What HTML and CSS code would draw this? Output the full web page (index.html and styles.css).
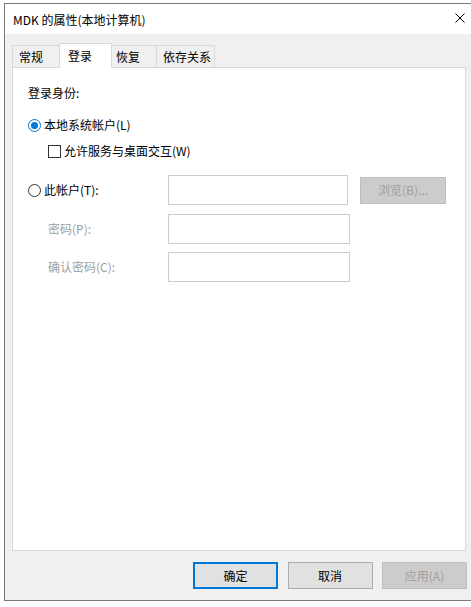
FILE: index.html
```html
<!DOCTYPE html>
<html>
<head>
    <title>MDK 的属性(本地计算机)</title>
    <link rel="stylesheet" href="styles.css">
</head>
<body>
    <div class="window">
        <div class="titlebar">
            <span class="title">MDK 的属性(本地计算机)</span>
            <span class="close">
                <svg width="10" height="10" viewBox="0 0 10 10"><path d="M0.5 0.5L9.5 9.5M9.5 0.5L0.5 9.5" stroke="#000" stroke-width="1"/></svg>
            </span>
        </div>
        <div class="body">
            <div class="tabs">
                <div class="tab">常规</div>
                <div class="tab active">登录</div>
                <div class="tab">恢复</div>
                <div class="tab">依存关系</div>
            </div>
            <div class="panel">
                <div class="group-label">登录身份:</div>
                <label class="option first"><span class="radio checked"></span>本地系统帐户(L)</label>
                <label class="check-row"><span class="checkbox"></span>允许服务与桌面交互(W)</label>

                <div class="account-grid">
                    <label class="option"><span class="radio"></span>此帐户(T):</label>
                    <div class="field short"></div>
                    <div class="btn browse disabled">浏览(B)...</div>

                    <span class="field-label">密码(P):</span>
                    <div class="field"></div>
                    <span></span>

                    <span class="field-label">确认密码(C):</span>
                    <div class="field"></div>
                    <span></span>
                </div>
            </div>
            <div class="actions">
                <div class="btn default">确定</div>
                <div class="btn">取消</div>
                <div class="btn disabled">应用(A)</div>
            </div>
        </div>
    </div>
</body>
</html>
```

FILE: styles.css
```css
body { margin: 0; background: #fff; overflow: hidden; font-family: "Noto Sans CJK SC", "Noto Sans", sans-serif; font-size: 12px; color: #000; }
.window { margin: 3px 0 0 4px; width: 480px; height: 598px; box-sizing: border-box; border: 1px solid #7a7a7a; background: #f0f0f0; display: flex; flex-direction: column; }
.titlebar { height: 30px; background: #fff; display: flex; align-items: center; justify-content: space-between; padding-left: 8px; flex: none; }
.title { line-height: 16px; margin-top: 1px; }
.close { width: 46px; height: 30px; display: flex; align-items: center; justify-content: center; margin-top: -3px; }
.body { padding: 9px 0 0 7px; }
.tabs { display: flex; align-items: flex-end; height: 24px; }
.tab { height: 22px; line-height: 21px; min-width: 48px; padding: 0 3px 0 6px; box-sizing: border-box; border: 1px solid #d9d9d9; border-bottom: none; margin-left: -1px; background: #f0f0f0; }
.tab:first-child { margin-left: 0; min-width: 50px; }
.tab.active { height: 25px; line-height: 23px; background: #fff; margin: 0 -2px -1px -3px; min-width: 53px; padding-left: 8px; position: relative; z-index: 1; }
.panel { width: 454px; height: 484px; box-sizing: border-box; border: 1px solid #d9d9d9; background: #fff; padding: 16px 0 0 15px; }
.group-label { line-height: 18px; }
.option { display: flex; align-items: center; gap: 3px; line-height: 18px; }
.option.first { margin-top: 14px; }
.radio { width: 13px; height: 13px; box-sizing: border-box; border: 1px solid #333; border-radius: 50%; background: #fff; display: flex; align-items: center; justify-content: center; }
.radio.checked { border-color: #0078d7; }
.radio.checked::after { content: ""; width: 7px; height: 7px; border-radius: 50%; background: #0078d7; }
.check-row { display: flex; align-items: center; gap: 3px; line-height: 18px; margin-top: 8px; padding-left: 20px; }
.checkbox { width: 13px; height: 13px; box-sizing: border-box; border: 1px solid #333; background: #fff; }
.account-grid { display: grid; grid-template-columns: 130px auto 86px; grid-auto-rows: 30px; column-gap: 10px; row-gap: 8.5px; align-items: center; justify-content: start; margin-top: 15px; }
.field-label { padding-left: 20px; color: #a0a0a0; line-height: 18px; }
.field { width: 182px; height: 30px; box-sizing: border-box; border: 1px solid #cccccc; background: #fff; }
.field.short { width: 180px; }
.btn { width: 85px; height: 27px; box-sizing: border-box; border: 1px solid #adadad; background: #e1e1e1; display: flex; align-items: center; justify-content: center; line-height: 16px; }
.btn.default { border: 2px solid #0078d7; }
.btn.disabled { background: #cccccc; border-color: #bfbfbf; color: #a0a0a0; }
.btn.browse { width: 86px; }
.actions { display: flex; justify-content: flex-end; gap: 9.5px; width: 455px; margin-top: 11px; }
```
